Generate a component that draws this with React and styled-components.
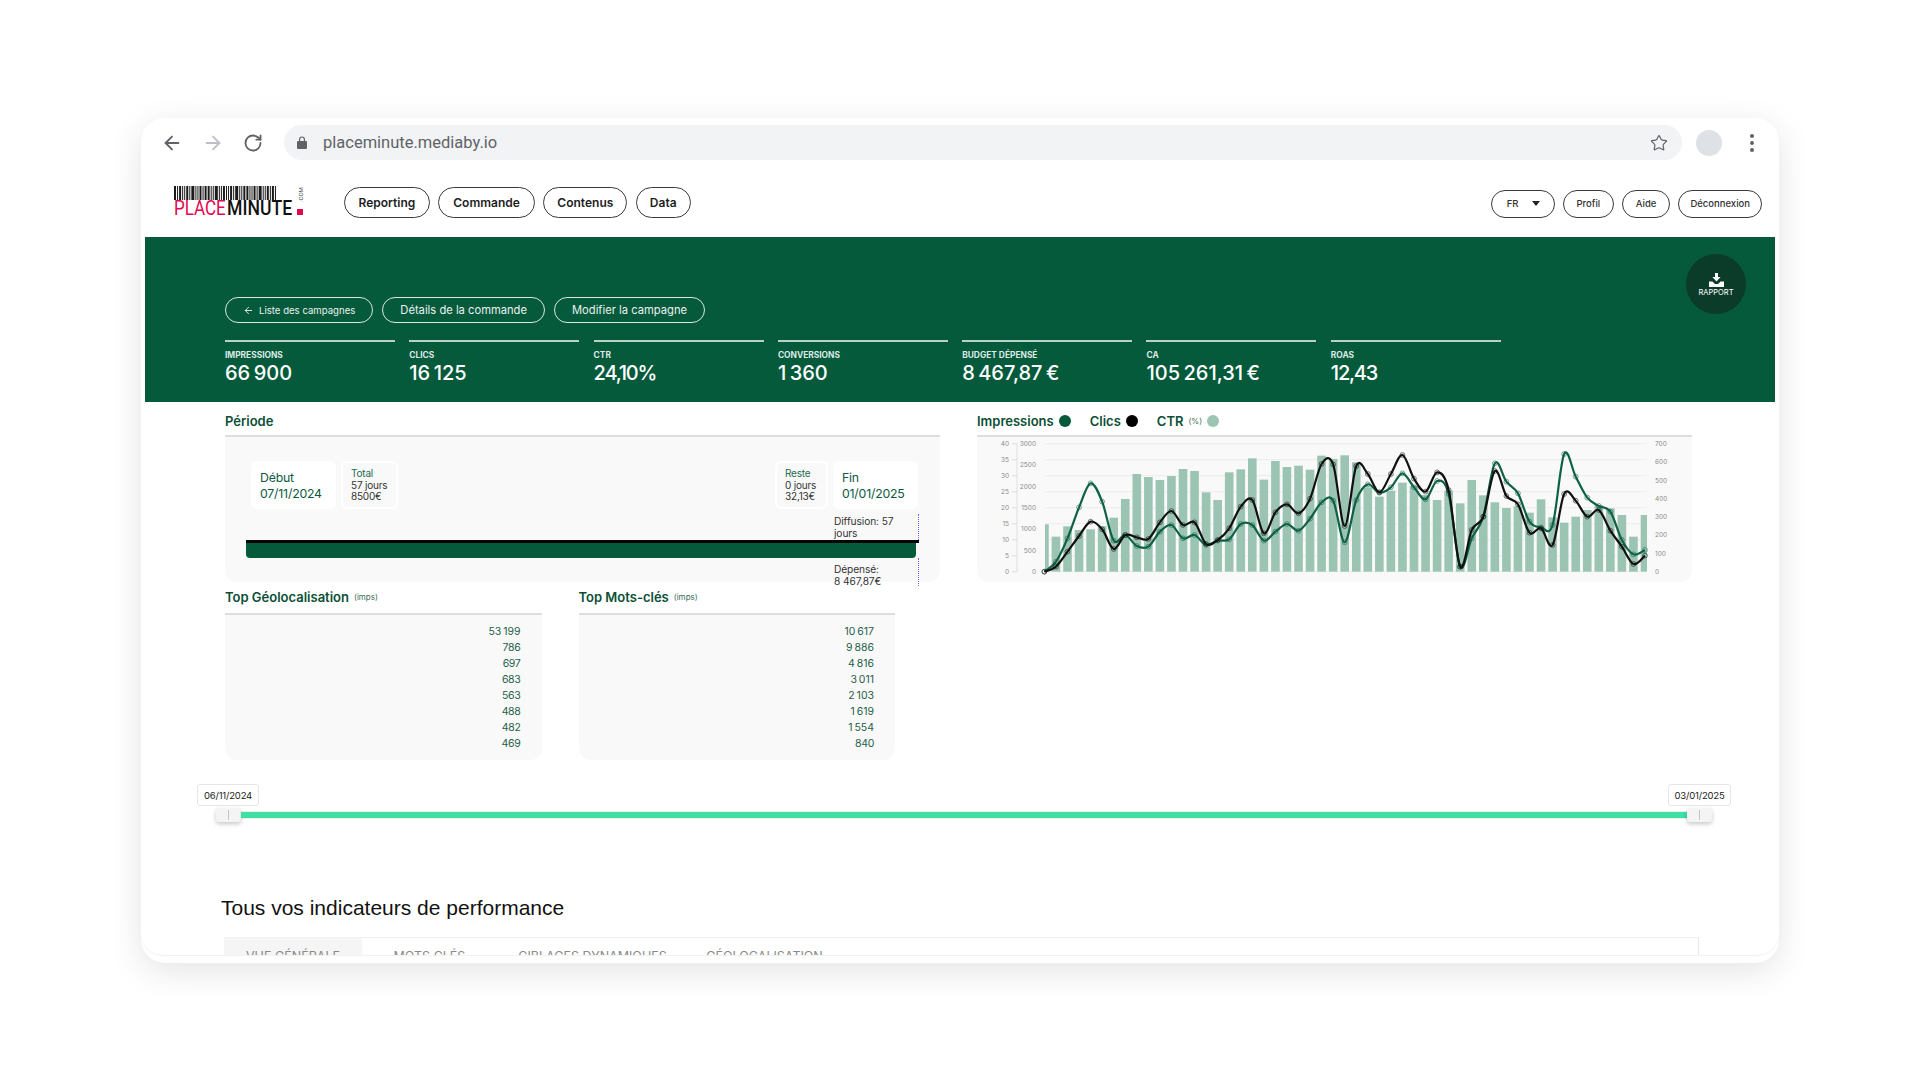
import React from "react";
import styled, { createGlobalStyle } from "styled-components";
import { ArrowLeft, ArrowRight, RotateCw, Star, ArrowLeft as BackArrow } from "lucide-react";

const GREEN = "#055a3c";
const FONT = `Inter, "Noto Sans", sans-serif`;

const GlobalStyle = createGlobalStyle`
    html, body {
        margin: 0;
        background: #ffffff;
        font-family: ${FONT};
    }
    * {
        box-sizing: border-box;
    }
`;

const Page = styled.div`
    height: 1080px;
    overflow: hidden;
    padding: 118px 141px 0;
`;

const Window = styled.div`
    height: 845px;
    background: #fff;
    border-radius: 24px;
    box-shadow: 0 8px 34px rgba(0, 0, 0, 0.11);
`;

const Viewport = styled.div`
    height: 837px;
    overflow: hidden;
    border-radius: 24px 24px 22px 22px;
    box-shadow: 0 1px 1px rgba(0, 0, 0, 0.06);
    padding-top: 7px;
`;

/* browser chrome */
const BrowserBar = styled.div`
    display: flex;
    align-items: center;
    height: 35px;
    padding: 0 25px 0 20px;
`;

const NavIcons = styled.div`
    display: flex;
    align-items: center;
    gap: 19px;
    width: 123px;
    color: #5f6368;
`;

const AddressBar = styled.div`
    flex: 1;
    height: 35px;
    border-radius: 18px;
    background: #f1f3f4;
    display: flex;
    align-items: center;
    padding: 0 14px 0 13px;
`;

const Url = styled.span`
    margin-left: 16px;
    flex: 1;
    font-family: Roboto, sans-serif;
    font-size: 16.5px;
    color: #5f6368;
`;

const Avatar = styled.div`
    width: 26px;
    height: 26px;
    border-radius: 50%;
    background: #dee1e6;
    margin-left: 14px;
`;

const Dots = styled.div`
    display: flex;
    flex-direction: column;
    gap: 3px;
    margin-left: 28px;
    span {
        width: 4px;
        height: 4px;
        border-radius: 50%;
        background: #5f6368;
    }
`;

/* site header */
const Header = styled.div`
    display: flex;
    align-items: center;
    height: 77px;
    padding: 8px 17px 0 33px;
`;

const NavGroup = styled.nav`
    display: flex;
    gap: 8.5px;
    margin-left: 40px;
`;

const NavPill = styled.div`
    height: 31px;
    border: 1.5px solid #3a3a3a;
    border-radius: 16px;
    padding: 0 ${(p) => p.$pad || 13}px;
    display: flex;
    align-items: center;
    font-size: 12px;
    font-weight: 600;
    color: #1e1e1e;
`;

const UserGroup = styled.div`
    display: flex;
    gap: 8px;
    margin-left: auto;
    margin-top: 2px;
`;

const UserPill = styled.div`
    height: 28px;
    border: 1.5px solid #3a3a3a;
    border-radius: 14px;
    padding: 0 ${(p) => p.$pad || 13}px;
    display: flex;
    align-items: center;
    gap: 13px;
    font-size: 9.5px;
    font-weight: 500;
    color: #333;
`;

const Caret = styled.span`
    width: 0;
    height: 0;
    border-left: 4.5px solid transparent;
    border-right: 4.5px solid transparent;
    border-top: 5px solid #222;
`;

/* green band */
const Band = styled.section`
    position: relative;
    height: 165px;
    margin: 0 4px;
    padding: 60px 0 0 80px;
    background: ${GREEN};
    color: #fff;
`;

const ReportButton = styled.div`
    position: absolute;
    top: 17px;
    right: 29px;
    width: 60px;
    height: 60px;
    border-radius: 50%;
    background: #0b3c2a;
    display: flex;
    flex-direction: column;
    align-items: center;
    justify-content: center;
    font-size: 7.5px;
    padding-top: 2px;
    gap: 1px;
`;

const ActionRow = styled.div`
    display: flex;
    gap: 9px;
`;

const ActionPill = styled.div`
    height: 26px;
    padding: 0 17px;
    border: 1px solid rgba(255, 255, 255, 0.85);
    border-radius: 13px;
    display: flex;
    align-items: center;
    gap: 5px;
    font-size: ${(p) => p.$size || 11.2}px;
    color: #e9f1ee;
`;

const StatRow = styled.div`
    display: flex;
    gap: 14.3px;
    margin-top: 17px;
`;

const Stat = styled.div`
    width: 170px;
    border-top: 2px solid rgba(255, 255, 255, 0.72);
    padding-top: 8px;
`;

const StatLabel = styled.div`
    font-size: 8.4px;
    line-height: 11px;
    font-weight: 700;
    color: #dfe9e5;
    text-transform: uppercase;
`;

const StatValue = styled.div`
    font-size: 20px;
    line-height: 25px;
    font-weight: 500;
    letter-spacing: -1.2px;
`;

/* dashboard */
const Dashboard = styled.div`
    display: grid;
    grid-template-columns: 715px 715px;
    column-gap: 37px;
    align-items: start;
    padding: 10px 0 0 84px;
`;

const SectionTitle = styled.div`
    font-size: 13px;
    line-height: 18px;
    height: 23px;
    font-weight: 600;
    color: #0a4f35;
    display: flex;
    align-items: flex-start;
`;

const Small = styled.small`
    font-size: 8px;
    font-weight: 400;
    margin-left: ${(p) => (p.$flush ? 0 : 5)}px;
    color: #3e6e5b;
    align-self: center;
`;

const Panel = styled.div`
    height: 147px;
    background: #f9f9f9;
    border-top: 2px solid #dedede;
    border-radius: 0 0 12px 12px;
`;

const PeriodPanel = styled(Panel)`
    padding: 24px 21px 0 21px;
`;

const PeriodTop = styled.div`
    display: flex;
    justify-content: space-between;
    padding: 0 1px 0 5px;
`;

const DateGroup = styled.div`
    display: flex;
    gap: 5px;
`;

const DateCard = styled.div`
    width: 85px;
    height: 48px;
    border-radius: 6px;
    background: #fff;
    padding: 9px 0 0 9px;
    font-size: 12.3px;
    line-height: 15.5px;
    letter-spacing: -0.2px;
    color: #0e5a40;
`;

const InfoCard = styled.div`
    height: 48px;
    width: ${(p) => p.$width}px;
    border: 2px solid #fff;
    border-radius: 6px;
    padding: 5px 0 0 8px;
    font-size: 10px;
    line-height: 11.5px;
    letter-spacing: -0.2px;
    color: #333;
    b {
        display: block;
        font-weight: 400;
        color: #1c6a4e;
    }
`;

const BarNote = styled.div`
    width: 85px;
    height: ${(p) => p.$height}px;
    margin: ${(p) => p.$margin};
    padding-top: ${(p) => p.$top}px;
    border-right: 1px dotted #7a5cf0;
    font-size: 10.2px;
    line-height: 12px;
    letter-spacing: -0.1px;
    color: #333;
`;

const SpendBar = styled.div`
    border-top: 3.5px solid #050505;
`;

const SpendFill = styled.div`
    height: 14.5px;
    width: calc(100% - 3px);
    background: ${GREEN};
    border-radius: 0 0 4px 4px;
`;

const TopsRow = styled.div`
    display: grid;
    grid-template-columns: 316.5px 316.5px;
    column-gap: 37px;
    margin-top: 7px;
`;

const TopTitle = styled(SectionTitle)`
    align-items: center;
    height: 16px;
    margin-bottom: 8px;
`;

const TopList = styled(Panel)`
    padding: 9px 21px 0 0;
    font-size: 10.5px;
    line-height: 16px;
    letter-spacing: -0.3px;
    text-align: right;
    color: #1f6049;
`;

const LegendRow = styled(SectionTitle)`
    gap: 5px;
    align-items: center;
    padding-bottom: 5px;
`;

const LegendDot = styled.i`
    width: 12px;
    height: 12px;
    border-radius: 50%;
    background: ${(p) => p.$color};
    margin-right: 14px;
`;

const ChartPanel = styled(Panel)`
    svg {
        display: block;
    }
`;

/* date slider */
const SliderLabels = styled.div`
    display: flex;
    justify-content: space-between;
    margin: 24px 48px 0 56px;
`;

const SliderLabel = styled.div`
    height: 22px;
    width: ${(p) => p.$width}px;
    border: 1px solid #e6e6e6;
    border-radius: 3px;
    background: #fff;
    display: flex;
    align-items: center;
    justify-content: center;
    font-size: 9.5px;
    letter-spacing: -0.2px;
    color: #222;
`;

const SliderRow = styled.div`
    display: flex;
    align-items: center;
    height: 14px;
    margin: 2px 67px 0 75px;
`;

const Track = styled.div`
    flex: 1;
    height: 6px;
    background: #3ee0a4;
    box-shadow: 0 0 0 0.5px #d9d9d9;
`;

const Thumb = styled.div`
    width: 25px;
    height: 14px;
    border-radius: 3px;
    background: linear-gradient(#c4c4c4, #c4c4c4) no-repeat center / 1px 10px, #f4f4f4;
    box-shadow: 0 2px 4px rgba(0, 0, 0, 0.22);
`;

/* bottom tabs */
const Heading = styled.h2`
    margin: 73px 0 0 80px;
    font-family: "Liberation Sans", Arial, sans-serif;
    font-size: 21px;
    line-height: 26px;
    font-weight: 400;
    color: #111;
`;

const TabBar = styled.div`
    display: flex;
    height: 60px;
    margin: 16px 80px 0 83px;
    border-top: 1px solid #f1f1f1;
    border-right: 1px solid #e6e6e6;
`;

const Tab = styled.div`
    width: ${(p) => p.$width}px;
    padding-top: 11px;
    text-align: center;
    font-size: 12.5px;
    line-height: 16px;
    color: #8a8a8a;
    background: ${(p) => (p.$active ? "#f5f5f5" : "transparent")};
`;

const StyledLock = styled.svg`
    flex: none;
`;

const LockIcon = () => (
    <StyledLock width="10" height="13" viewBox="0 0 10 13" fill="#5f6368">
        <path d="M1 5h1V3.4a3 3 0 0 1 6 0V5h1a1 1 0 0 1 1 1v6a1 1 0 0 1-1 1H1a1 1 0 0 1-1-1V6a1 1 0 0 1 1-1Zm2.2 0h3.6V3.4a1.8 1.8 0 0 0-3.6 0V5Z" />
    </StyledLock>
);

const DownloadIcon = () => (
    <svg width="15" height="14" viewBox="0 0 15 14" fill="#fff">
        <path d="M6 0h3v4h2.6L7.5 8.4 3.4 4H6V0Z" />
        <path d="M0 8.5h3.4l2.6 2.4h3l2.6-2.4H15V14H0V8.5Z" />
    </svg>
);

const barWidths = [2, 1, 2, 1, 1, 2, 1, 3, 1, 1, 2, 1, 2, 2, 1, 1, 3, 1, 1, 2, 1, 1, 2, 1, 3, 1, 1, 2, 2, 1, 1, 2, 1, 3, 1, 1, 2, 1, 2, 1];

const Logo = () => {
    let x = 0;
    const lines = [];
    barWidths.forEach((w, i) => {
        lines.push(<rect key={i} x={x} y="1" width={w} height="14" fill="#1a1a1a" />);
        x += w + 1.05;
    });
    return (
        <svg width="130" height="36" viewBox="0 0 130 36">
            {lines}
            <text transform="translate(0 30) scale(0.83 1)" fontFamily="Roboto, sans-serif" fontSize="20.5" fill="#e4064f">PLACE</text>
            <text transform="translate(53 30) scale(0.86 1)" fontFamily="Roboto, sans-serif" fontSize="20.5" fontWeight="500" fill="#111">MINUTE</text>
            <rect x="123" y="24" width="6" height="6" fill="#e4064f" />
            <text transform="translate(128.5 17) rotate(-90)" fontFamily="Roboto, sans-serif" fontSize="6" fill="#444">.COM</text>
        </svg>
    );
};

const bars = [373, 410, 379, 390, 388, 378, 353, 297, 222, 231, 240, 228, 207, 213, 277, 300, 217, 208, 175, 239, 183, 201, 197, 209, 167, 177, 166, 187, 262, 290, 272, 248, 258, 285, 300, 272, 310, 240, 286, 307, 324, 319, 338, 298, 352, 368, 350, 330, 315, 325, 345, 410, 345];
const greenLine = [515, 485, 415, 322, 250, 305, 422, 405, 438, 440, 395, 375, 415, 405, 435, 422, 418, 372, 375, 422, 395, 372, 392, 356, 307, 302, 427, 300, 253, 278, 262, 220, 262, 298, 243, 282, 500, 415, 350, 190, 245, 280, 365, 382, 375, 162, 230, 293, 318, 335, 420, 463, 450];
const blackLine = [515, 500, 455, 408, 365, 388, 447, 405, 412, 417, 367, 333, 375, 367, 432, 420, 385, 320, 300, 400, 337, 313, 340, 296, 192, 193, 378, 198, 222, 277, 222, 165, 236, 275, 217, 270, 500, 390, 350, 213, 288, 313, 398, 385, 435, 282, 302, 350, 330, 392, 440, 492, 467];

const chartY = (z) => z / 3 - 37;
const chartX = (i) => 67.4 + 11.55 * i;

const smoothPath = (values) => {
    const pts = values.map((v, i) => [chartX(i), chartY(v)]);
    let d = `M${pts[0][0]} ${pts[0][1]}`;
    for (let i = 0; i < pts.length - 1; i++) {
        const p0 = pts[i - 1] || pts[i];
        const p1 = pts[i];
        const p2 = pts[i + 1];
        const p3 = pts[i + 2] || p2;
        const c1x = p1[0] + (p2[0] - p0[0]) / 6;
        const c1y = p1[1] + (p2[1] - p0[1]) / 6;
        const c2x = p2[0] - (p3[0] - p1[0]) / 6;
        const c2y = p2[1] - (p3[1] - p1[1]) / 6;
        d += `C${c1x} ${c1y} ${c2x} ${c2y} ${p2[0]} ${p2[1]}`;
    }
    return d;
};

const AxisText = styled.text`
    font-family: ${FONT};
    font-size: 6.5px;
    fill: #8b8b8b;
`;

const Series = ({ values, color }) => (
    <g>
        <path d={smoothPath(values)} fill="none" stroke={color} strokeWidth="2.2" />
        {values.map((v, i) => (
            <circle key={i} cx={chartX(i)} cy={chartY(v)} r="2.4" fill="none" stroke={color} strokeWidth="0.7" opacity="0.8" />
        ))}
    </g>
);

const Chart = () => {
    const base = chartY(515);
    return (
        <svg width="715" height="145" viewBox="0 0 715 145">
            {[0, 1, 2, 3, 4, 5, 6, 7, 8].map((k) => {
                const y = chartY(131 + 48 * k);
                return (
                    <g key={k}>
                        <line x1="68" x2="670" y1={y} y2={y} stroke="#ececec" />
                        <line x1="35" x2="40" y1={y} y2={y} stroke="#d4d4d4" strokeWidth="0.7" />
                        <AxisText x="32" y={y + 2.4} textAnchor="end">{40 - k * 5}</AxisText>
                    </g>
                );
            })}
            <line x1="40" x2="40" y1={chartY(131)} y2={base} stroke="#d4d4d4" strokeWidth="0.7" />
            {[0, 1, 2, 3, 4, 5, 6].map((k) => (
                <AxisText key={k} x="59" y={chartY(515 - 64 * k) + 2.4} textAnchor="end">{k * 500}</AxisText>
            ))}
            {[0, 1, 2, 3, 4, 5, 6, 7].map((k) => (
                <AxisText key={k} x="678" y={chartY(515 - 54.86 * k) + 2.4}>{k * 100}</AxisText>
            ))}
            {bars.map((top, i) => {
                const x0 = Math.max(chartX(i) - 4.3, 68);
                const x1 = Math.min(chartX(i) + 4.3, 670);
                return <rect key={i} x={x0} y={chartY(top)} width={x1 - x0} height={base - chartY(top)} fill="#9cc4b2" />;
            })}
            <Series values={greenLine} color="#0e6146" />
            <Series values={blackLine} color="#111111" />
        </svg>
    );
};

const stats = [
    ["Impressions", "66\u202f900"],
    ["Clics", "16\u202f125"],
    ["CTR", "24,10%"],
    ["Conversions", "1\u202f360"],
    ["Budget dépensé", "8\u202f467,87\u202f€"],
    ["CA", "105\u202f261,31\u202f€"],
    ["ROAS", "12,43"],
];

const geo = ["53\u202f199", "786", "697", "683", "563", "488", "482", "469"];
const keywords = ["10\u202f617", "9\u202f886", "4\u202f816", "3\u202f011", "2\u202f103", "1\u202f619", "1\u202f554", "840"];

export default function App() {
    return (
        <Page>
            <GlobalStyle />
            <Window>
                <Viewport>
                    <BrowserBar>
                        <NavIcons>
                            <ArrowLeft size={22} strokeWidth={2} />
                            <ArrowRight size={22} strokeWidth={2} color="#bdc1c6" />
                            <RotateCw size={20} strokeWidth={2.2} />
                        </NavIcons>
                        <AddressBar>
                            <LockIcon />
                            <Url>placeminute.mediaby.io</Url>
                            <Star size={18} strokeWidth={1.6} color="#5f6368" />
                        </AddressBar>
                        <Avatar />
                        <Dots><span /><span /><span /></Dots>
                    </BrowserBar>
                    <Header>
                        <Logo />
                        <NavGroup>
                            <NavPill $pad={13.5}>Reporting</NavPill>
                            <NavPill $pad={14}>Commande</NavPill>
                            <NavPill $pad={13}>Contenus</NavPill>
                            <NavPill>Data</NavPill>
                        </NavGroup>
                        <UserGroup>
                            <UserPill $pad={14.5}>FR<Caret /></UserPill>
                            <UserPill $pad={12.5}>Profil</UserPill>
                            <UserPill>Aide</UserPill>
                            <UserPill $pad={11}>Déconnexion</UserPill>
                        </UserGroup>
                    </Header>
                    <Band>
                        <ReportButton>
                            <DownloadIcon />
                            RAPPORT
                        </ReportButton>
                        <ActionRow>
                            <ActionPill $size={9.6}>
                                <BackArrow size={11} strokeWidth={2} />
                                Liste des campagnes
                            </ActionPill>
                            <ActionPill>Détails de la commande</ActionPill>
                            <ActionPill>Modifier la campagne</ActionPill>
                        </ActionRow>
                        <StatRow>
                            {stats.map(([label, value]) => (
                                <Stat key={label}>
                                    <StatLabel>{label}</StatLabel>
                                    <StatValue>{value}</StatValue>
                                </Stat>
                            ))}
                        </StatRow>
                    </Band>
                    <Dashboard>
                        <div>
                            <SectionTitle>Période</SectionTitle>
                            <PeriodPanel>
                                <PeriodTop>
                                    <DateGroup>
                                        <DateCard>Début<br />07/11/2024</DateCard>
                                        <InfoCard $width={57}><b>Total</b>57 jours<br />8500€</InfoCard>
                                    </DateGroup>
                                    <DateGroup>
                                        <InfoCard $width={53}><b>Reste</b>0 jours<br />32,13€</InfoCard>
                                        <DateCard>Fin<br />01/01/2025</DateCard>
                                    </DateGroup>
                                </PeriodTop>
                                <BarNote $height={26} $margin="5px 0 0 auto" $top={1}>Diffusion: 57<br />jours</BarNote>
                                <SpendBar><SpendFill /></SpendBar>
                                <BarNote $height={28} $margin="0 0 0 auto" $top={5}>Dépensé:<br />8 467,87€</BarNote>
                            </PeriodPanel>
                            <TopsRow>
                                <div>
                                    <TopTitle>Top Géolocalisation<Small>(imps)</Small></TopTitle>
                                    <TopList>
                                        {geo.map((n) => <div key={n}>{n}</div>)}
                                    </TopList>
                                </div>
                                <div>
                                    <TopTitle>Top Mots-clés<Small>(imps)</Small></TopTitle>
                                    <TopList>
                                        {keywords.map((n) => <div key={n}>{n}</div>)}
                                    </TopList>
                                </div>
                            </TopsRow>
                        </div>
                        <div>
                            <LegendRow>
                                Impressions<LegendDot $color={GREEN} />
                                Clics<LegendDot $color="#000" />
                                CTR<Small $flush>(%)</Small><LegendDot $color="#9cc4b2" />
                            </LegendRow>
                            <ChartPanel><Chart /></ChartPanel>
                        </div>
                    </Dashboard>
                    <SliderLabels>
                        <SliderLabel $width={62}>06/11/2024</SliderLabel>
                        <SliderLabel $width={63}>03/01/2025</SliderLabel>
                    </SliderLabels>
                    <SliderRow>
                        <Thumb />
                        <Track />
                        <Thumb />
                    </SliderRow>
                    <Heading>Tous vos indicateurs de performance</Heading>
                    <TabBar>
                        <Tab $active $width={138}>VUE GÉNÉRALE</Tab>
                        <Tab $width={135}>MOTS CLÉS</Tab>
                        <Tab $width={191}>CIBLAGES DYNAMIQUES</Tab>
                        <Tab $width={153}>GÉOLOCALISATION</Tab>
                    </TabBar>
                </Viewport>
            </Window>
        </Page>
    );
}
